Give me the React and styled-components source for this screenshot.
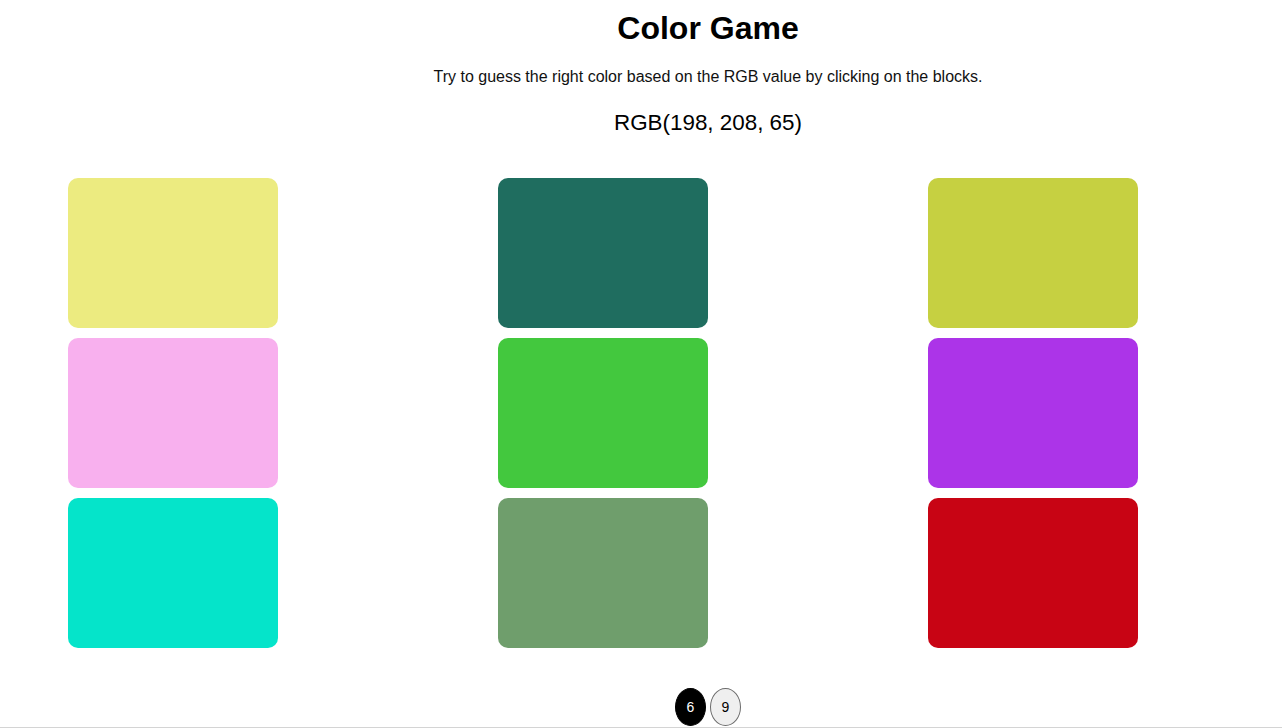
import React from 'react'
import styled, { createGlobalStyle } from 'styled-components'

const GlobalStyle = createGlobalStyle`
    html, body {
        margin: 0;
        padding: 0;
        background: #ffffff;
    }
    body {
        font-family: "Liberation Sans", Arial, sans-serif;
        color: #000;
    }
`;

const Marco = styled.div`
    width: 100%;
    overflow: hidden;
    border-bottom: 1px solid #d4d4d4;
`;

const Page = styled.main`
    width: 1400px;
    margin: 0 8px;
    padding-top: 10px;
    text-align: center;
`;

const Titulo = styled.h1`
    margin: 0 0 21px;
    font-size: 32px;
    font-weight: bold;
    line-height: 37px;
`;

const Instrucciones = styled.p`
    margin: 0;
    font-size: 16px;
    line-height: 18px;
    color: #111;
`;

const Rgb = styled.h2`
    margin: 24px 0 0;
    font-size: 22.4px;
    font-weight: normal;
    line-height: 26px;
`;

const Tablero = styled.div`
    display: grid;
    grid-template-columns: repeat(3, 420px);
    column-gap: 10px;
    row-gap: 10px;
    padding: 0 60px;
    margin-top: 42px;
`;

const Bloque = styled.div`
    width: 210px;
    height: 150px;
    border-radius: 10px;
    background: ${p => p.$color};
    cursor: pointer;
`;

const Modos = styled.div`
    display: flex;
    justify-content: center;
    gap: 4px;
    margin-top: 40px;
    padding-bottom: 1px;
`;

const Modo = styled.button`
    width: 31px;
    height: 38px;
    padding: 0;
    border-radius: 50%;
    font-family: "Liberation Sans", Arial, sans-serif;
    font-size: 14px;
    border: 1px solid ${p => (p.$activo ? '#000' : '#6b6b6b')};
    background: ${p => (p.$activo ? '#000' : '#efefef')};
    color: ${p => (p.$activo ? '#fff' : '#000')};
    cursor: pointer;
`;

const colores = [
    'rgb(236, 235, 128)',
    'rgb(31, 109, 95)',
    'rgb(198, 208, 65)',
    'rgb(248, 176, 238)',
    'rgb(67, 200, 62)',
    'rgb(172, 52, 232)',
    'rgb(5, 228, 202)',
    'rgb(111, 158, 108)',
    'rgb(200, 4, 20)',
];

function App() {
    return (
        <>
            <GlobalStyle />
            <Marco>
                <Page>
                    <Titulo>Color Game</Titulo>
                    <Instrucciones>Try to guess the right color based on the RGB value by clicking on the blocks.</Instrucciones>
                    <Rgb>RGB(198, 208, 65)</Rgb>
                    <Tablero>
                        {colores.map((c, i) => (
                            <Bloque key={i} $color={c} />
                        ))}
                    </Tablero>
                    <Modos>
                        <Modo $activo>6</Modo>
                        <Modo>9</Modo>
                    </Modos>
                </Page>
            </Marco>
        </>
    )
}

export default App
